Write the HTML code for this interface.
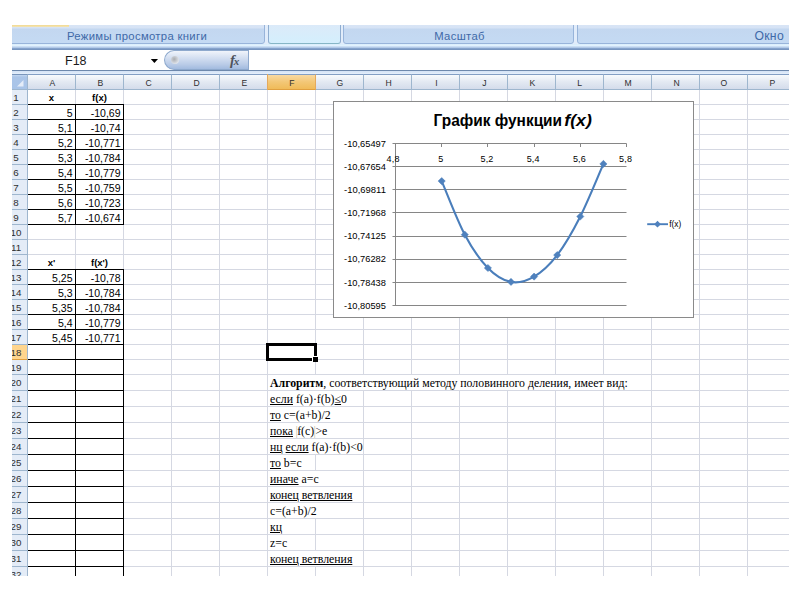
<!DOCTYPE html>
<html lang="ru">
<head>
<meta charset="utf-8">
<title>Excel</title>
<style>
html,body{margin:0;padding:0;background:#fff;}
body{width:800px;height:600px;position:relative;overflow:hidden;font-family:"Liberation Sans",sans-serif;}
#app{position:absolute;left:12px;top:25px;width:777px;height:551px;overflow:hidden;background:#fff;}
#app *{position:absolute;box-sizing:border-box;}
#app span,#app b,#app u{position:static;}
.ribbon{left:0;top:0;width:777px;height:22px;background:#e1ecfa;}
.tabmark{left:0;top:0;width:57px;height:2px;background:linear-gradient(#f3d98f,#f1e4b8);z-index:3;}
.grp{top:-5px;height:24px;border:1px solid #98b4da;border-radius:3px;background:linear-gradient(#dbe7f6 0,#d6e3f5 7px,#c3d7f0 8px,#c4daf3 100%);color:#3f69a8;font-size:11.3px;letter-spacing:0.32px;line-height:31px;text-align:center;white-space:nowrap;}
.grp.hot{background:linear-gradient(#dde9f8,#d4effd);border-color:#8fadd0 #8fadd0 #86b6c6 #8fadd0;}
.rib2{left:0;top:19px;width:777px;height:4px;background:linear-gradient(#d9edfc 0,#e3f3fe 45%,#c0d5ef 70%,#a9c2e4);}
.ribline{left:0;top:23px;width:777px;height:2px;background:linear-gradient(#8eabd3,#718fba);}
.fbar{left:0;top:25px;width:777px;height:20px;background:#fff;}
.namebox{left:0;top:0;width:152px;height:20px;font-size:12.5px;line-height:20px;color:#1a1a1a;}
.fxpill{left:152px;top:0;width:84px;height:20px;border-radius:10px 0 0 10px;background:linear-gradient(#f0f4fb,#d6e1f2 35%,#b9cbe7 75%,#a2bbdf);border:1px solid #8ea9cd;border-right:none;}
.finput{left:236px;top:0;width:541px;height:20px;border-left:1px solid #8ea9cd;background:#fff;}
.fline{left:0;top:45px;width:777px;height:1px;background:#6d88ac;}
.fgap{left:0;top:46px;width:777px;height:3px;background:linear-gradient(#d3e2f5,#dce9f9 60%,#e6f0fb);}
.ch{top:49px;height:16px;border-top:1px solid #829ec4;border-bottom:1px solid #9eb6ce;border-right:1px solid #9eb6ce;background:linear-gradient(#f7fafd,#e3e9f2 50%,#d4dceb);color:#2f2f2f;font-size:9.8px;line-height:15px;text-align:center;}
.ch.sel{background:linear-gradient(#f8d9a2,#f3c776 50%,#f0bb59);border-bottom-color:#e0a040;border-right-color:#e5a95c;box-shadow:-1px 0 0 #e5a95c;}
.hl{display:inline-block;transform:scaleX(.88);position:relative !important;left:0.6px;}
.corner{left:0;top:49px;width:16px;height:16px;background:linear-gradient(#c3d7f0 0,#abc5e8 2px,#a9c4e8);border-top:1px solid #7995bb;border-right:1px solid #9eb6ce;border-bottom:1px solid #9eb6ce;}
.rh{left:-7px;width:23px;background:#e4ecf7;border-right:1px solid #9eb6ce;border-bottom:1px solid #9eb6ce;color:#2f2f2f;font-size:9.8px;text-align:center;}
.rh.sel{background:#ffd58d;border-bottom-color:#e0a040;}
.gv{width:1px;background:#d5d8e2;}
.gh{height:1px;background:#d5d8e2;}
.w{background:#fff;}
.bk{background:#000;}
.c{font-size:10.5px;color:#000;white-space:nowrap;height:16px;line-height:16px;}
.c.r{text-align:right;padding-right:2.5px;}
.c.b{text-align:center;font-weight:bold;font-size:9.5px;}
.t{font-family:"Liberation Serif",serif;font-size:11.8px;color:#000;white-space:nowrap;height:16px;line-height:16px;left:258px;}
.t u{text-decoration:underline;}
.t .p{color:#c4bfa6;margin:0 -0.6px;}
.selbox{border:3px solid #000;}
.handle{background:#000;border:1px solid #fff;border-right:none;border-bottom:none;}
#chart{left:321px;top:76px;}
</style>
</head>
<body>
<div id="app">

<div class="ribbon">
<div class="tabmark"></div>
<div class="grp" style="left:-6px;width:259px;"><span style="position:relative;left:1.5px;">Режимы просмотра книги</span></div>
<div class="grp hot" style="left:256px;width:73px;"></div>
<div class="grp" style="left:331px;width:231px;"><span style="position:relative;left:1px;">Масштаб</span></div>
<div class="grp" style="left:565px;width:230px;text-align:right;padding-right:22px;font-size:12.2px;">Окно</div>
</div>
<div class="rib2"></div><div class="ribline"></div>
<div class="fbar">
<div class="namebox"><span style="position:absolute;left:53px;top:1px;">F18</span><svg style="left:138px;top:8px;" width="10" height="6" viewBox="0 0 10 6"><path d="M0.8 0.9h7.2l-3.6 4.1z" fill="#000"/></svg></div>
<div class="fxpill"><svg style="left:5px;top:4px;" width="10" height="10" viewBox="0 0 10 10"><defs><radialGradient id="kg" cx="40%" cy="40%" r="60%"><stop offset="0" stop-color="#a9acb0"/><stop offset="1" stop-color="#dfe3ea"/></radialGradient></defs><circle cx="5" cy="5" r="4" fill="url(#kg)"/></svg><div style="left:65px;top:-1px;font-family:'Liberation Serif',serif;font-style:italic;font-weight:bold;font-size:14.5px;line-height:20px;color:#4d525c;white-space:nowrap;">f<span style="font-size:11px;margin-left:-1px;">x</span></div></div>
<div class="finput"></div>
</div>
<div class="fline"></div><div class="fgap"></div>
<div class="corner"><svg style="left:5px;top:5px;" width="7" height="7" viewBox="0 0 7 7"><path d="M6.5 0V6.5H0z" fill="#e4ecf8"/></svg></div>
<div class="ch" style="left:16px;width:48px;"><span class="hl">A</span></div>
<div class="ch" style="left:64px;width:48px;"><span class="hl">B</span></div>
<div class="ch" style="left:112px;width:48px;"><span class="hl">C</span></div>
<div class="ch" style="left:160px;width:48px;"><span class="hl">D</span></div>
<div class="ch" style="left:208px;width:48px;"><span class="hl">E</span></div>
<div class="ch sel" style="left:256px;width:48px;"><span class="hl">F</span></div>
<div class="ch" style="left:304px;width:48px;"><span class="hl">G</span></div>
<div class="ch" style="left:352px;width:48px;"><span class="hl">H</span></div>
<div class="ch" style="left:400px;width:48px;"><span class="hl">I</span></div>
<div class="ch" style="left:448px;width:48px;"><span class="hl">J</span></div>
<div class="ch" style="left:496px;width:48px;"><span class="hl">K</span></div>
<div class="ch" style="left:544px;width:48px;"><span class="hl">L</span></div>
<div class="ch" style="left:592px;width:48px;"><span class="hl">M</span></div>
<div class="ch" style="left:640px;width:48px;"><span class="hl">N</span></div>
<div class="ch" style="left:688px;width:48px;"><span class="hl">O</span></div>
<div class="ch" style="left:736px;width:48px;"><span class="hl">P</span></div>
<div class="gv" style="left:63px;top:65px;height:486px;"></div>
<div class="gv" style="left:111px;top:65px;height:486px;"></div>
<div class="gv" style="left:159px;top:65px;height:486px;"></div>
<div class="gv" style="left:207px;top:65px;height:486px;"></div>
<div class="gv" style="left:255px;top:65px;height:486px;"></div>
<div class="gv" style="left:303px;top:65px;height:486px;"></div>
<div class="gv" style="left:351px;top:65px;height:486px;"></div>
<div class="gv" style="left:399px;top:65px;height:486px;"></div>
<div class="gv" style="left:447px;top:65px;height:486px;"></div>
<div class="gv" style="left:495px;top:65px;height:486px;"></div>
<div class="gv" style="left:543px;top:65px;height:486px;"></div>
<div class="gv" style="left:591px;top:65px;height:486px;"></div>
<div class="gv" style="left:639px;top:65px;height:486px;"></div>
<div class="gv" style="left:687px;top:65px;height:486px;"></div>
<div class="gv" style="left:735px;top:65px;height:486px;"></div>
<div class="gv" style="left:783px;top:65px;height:486px;"></div>
<div class="gh" style="left:16px;top:79px;width:761px;"></div>
<div class="gh" style="left:16px;top:94px;width:761px;"></div>
<div class="gh" style="left:16px;top:109px;width:761px;"></div>
<div class="gh" style="left:16px;top:124px;width:761px;"></div>
<div class="gh" style="left:16px;top:139px;width:761px;"></div>
<div class="gh" style="left:16px;top:154px;width:761px;"></div>
<div class="gh" style="left:16px;top:169px;width:761px;"></div>
<div class="gh" style="left:16px;top:184px;width:761px;"></div>
<div class="gh" style="left:16px;top:199px;width:761px;"></div>
<div class="gh" style="left:16px;top:214px;width:761px;"></div>
<div class="gh" style="left:16px;top:229px;width:761px;"></div>
<div class="gh" style="left:16px;top:244px;width:761px;"></div>
<div class="gh" style="left:16px;top:259px;width:761px;"></div>
<div class="gh" style="left:16px;top:274px;width:761px;"></div>
<div class="gh" style="left:16px;top:289px;width:761px;"></div>
<div class="gh" style="left:16px;top:304px;width:761px;"></div>
<div class="gh" style="left:16px;top:319px;width:761px;"></div>
<div class="gh" style="left:16px;top:334px;width:761px;"></div>
<div class="gh" style="left:16px;top:349px;width:761px;"></div>
<div class="gh" style="left:16px;top:365px;width:761px;"></div>
<div class="gh" style="left:16px;top:381px;width:761px;"></div>
<div class="gh" style="left:16px;top:397px;width:761px;"></div>
<div class="gh" style="left:16px;top:413px;width:761px;"></div>
<div class="gh" style="left:16px;top:429px;width:761px;"></div>
<div class="gh" style="left:16px;top:445px;width:761px;"></div>
<div class="gh" style="left:16px;top:461px;width:761px;"></div>
<div class="gh" style="left:16px;top:477px;width:761px;"></div>
<div class="gh" style="left:16px;top:493px;width:761px;"></div>
<div class="gh" style="left:16px;top:509px;width:761px;"></div>
<div class="gh" style="left:16px;top:525px;width:761px;"></div>
<div class="gh" style="left:16px;top:541px;width:761px;"></div>
<div class="gh" style="left:16px;top:557px;width:761px;"></div>
<div class="rh" style="top:65px;height:15px;line-height:15px;">1</div>
<div class="rh" style="top:80px;height:15px;line-height:15px;">2</div>
<div class="rh" style="top:95px;height:15px;line-height:15px;">3</div>
<div class="rh" style="top:110px;height:15px;line-height:15px;">4</div>
<div class="rh" style="top:125px;height:15px;line-height:15px;">5</div>
<div class="rh" style="top:140px;height:15px;line-height:15px;">6</div>
<div class="rh" style="top:155px;height:15px;line-height:15px;">7</div>
<div class="rh" style="top:170px;height:15px;line-height:15px;">8</div>
<div class="rh" style="top:185px;height:15px;line-height:15px;">9</div>
<div class="rh" style="top:200px;height:15px;line-height:15px;">10</div>
<div class="rh" style="top:215px;height:15px;line-height:15px;">11</div>
<div class="rh" style="top:230px;height:15px;line-height:15px;">12</div>
<div class="rh" style="top:245px;height:15px;line-height:15px;">13</div>
<div class="rh" style="top:260px;height:15px;line-height:15px;">14</div>
<div class="rh" style="top:275px;height:15px;line-height:15px;">15</div>
<div class="rh" style="top:290px;height:15px;line-height:15px;">16</div>
<div class="rh" style="top:305px;height:15px;line-height:15px;">17</div>
<div class="rh sel" style="top:320px;height:15px;line-height:15px;">18</div>
<div class="rh" style="top:335px;height:15px;line-height:15px;">19</div>
<div class="rh" style="top:350px;height:16px;line-height:16px;">20</div>
<div class="rh" style="top:366px;height:16px;line-height:16px;">21</div>
<div class="rh" style="top:382px;height:16px;line-height:16px;">22</div>
<div class="rh" style="top:398px;height:16px;line-height:16px;">23</div>
<div class="rh" style="top:414px;height:16px;line-height:16px;">24</div>
<div class="rh" style="top:430px;height:16px;line-height:16px;">25</div>
<div class="rh" style="top:446px;height:16px;line-height:16px;">26</div>
<div class="rh" style="top:462px;height:16px;line-height:16px;">27</div>
<div class="rh" style="top:478px;height:16px;line-height:16px;">28</div>
<div class="rh" style="top:494px;height:16px;line-height:16px;">29</div>
<div class="rh" style="top:510px;height:16px;line-height:16px;">30</div>
<div class="rh" style="top:526px;height:16px;line-height:16px;">31</div>
<div class="rh" style="top:542px;height:16px;line-height:16px;">32</div>
<div class="rh" style="top:558px;height:16px;line-height:16px;">33</div>
<div class="w" style="left:256px;top:350px;width:383px;height:15px;"></div>
<div class="w" style="left:256px;top:366px;width:95px;height:15px;"></div>
<div class="w" style="left:256px;top:382px;width:95px;height:15px;"></div>
<div class="w" style="left:256px;top:398px;width:95px;height:15px;"></div>
<div class="w" style="left:256px;top:414px;width:95px;height:15px;"></div>
<div class="w" style="left:256px;top:446px;width:95px;height:15px;"></div>
<div class="w" style="left:256px;top:462px;width:95px;height:15px;"></div>
<div class="w" style="left:256px;top:478px;width:95px;height:15px;"></div>
<div class="w" style="left:256px;top:526px;width:95px;height:15px;"></div>
<div class="bk" style="left:16px;top:79px;width:96px;height:1px;"></div>
<div class="bk" style="left:16px;top:94px;width:96px;height:1px;"></div>
<div class="bk" style="left:16px;top:109px;width:96px;height:1px;"></div>
<div class="bk" style="left:16px;top:124px;width:96px;height:1px;"></div>
<div class="bk" style="left:16px;top:139px;width:96px;height:1px;"></div>
<div class="bk" style="left:16px;top:154px;width:96px;height:1px;"></div>
<div class="bk" style="left:16px;top:169px;width:96px;height:1px;"></div>
<div class="bk" style="left:16px;top:184px;width:96px;height:1px;"></div>
<div class="bk" style="left:16px;top:199px;width:96px;height:1px;"></div>
<div class="bk" style="left:16px;top:244px;width:96px;height:1px;"></div>
<div class="bk" style="left:16px;top:259px;width:96px;height:1px;"></div>
<div class="bk" style="left:16px;top:274px;width:96px;height:1px;"></div>
<div class="bk" style="left:16px;top:289px;width:96px;height:1px;"></div>
<div class="bk" style="left:16px;top:304px;width:96px;height:1px;"></div>
<div class="bk" style="left:16px;top:319px;width:96px;height:1px;"></div>
<div class="bk" style="left:16px;top:334px;width:96px;height:1px;"></div>
<div class="bk" style="left:16px;top:349px;width:96px;height:1px;"></div>
<div class="bk" style="left:16px;top:365px;width:96px;height:1px;"></div>
<div class="bk" style="left:16px;top:381px;width:96px;height:1px;"></div>
<div class="bk" style="left:16px;top:397px;width:96px;height:1px;"></div>
<div class="bk" style="left:16px;top:413px;width:96px;height:1px;"></div>
<div class="bk" style="left:16px;top:429px;width:96px;height:1px;"></div>
<div class="bk" style="left:16px;top:445px;width:96px;height:1px;"></div>
<div class="bk" style="left:16px;top:461px;width:96px;height:1px;"></div>
<div class="bk" style="left:16px;top:477px;width:96px;height:1px;"></div>
<div class="bk" style="left:16px;top:493px;width:96px;height:1px;"></div>
<div class="bk" style="left:16px;top:509px;width:96px;height:1px;"></div>
<div class="bk" style="left:16px;top:525px;width:96px;height:1px;"></div>
<div class="bk" style="left:16px;top:541px;width:96px;height:1px;"></div>
<div class="bk" style="left:16px;top:557px;width:96px;height:1px;"></div>
<div class="bk" style="left:63px;top:79px;width:1px;height:121px;"></div>
<div class="bk" style="left:63px;top:244px;width:1px;height:330px;"></div>
<div class="bk" style="left:111px;top:79px;width:1px;height:121px;"></div>
<div class="bk" style="left:111px;top:244px;width:1px;height:330px;"></div>
<div class="c b" style="left:16px;top:65px;width:47px;">x</div>
<div class="c r" style="left:16px;top:80px;width:47px;">5</div>
<div class="c r" style="left:16px;top:95px;width:47px;">5,1</div>
<div class="c r" style="left:16px;top:110px;width:47px;">5,2</div>
<div class="c r" style="left:16px;top:125px;width:47px;">5,3</div>
<div class="c r" style="left:16px;top:140px;width:47px;">5,4</div>
<div class="c r" style="left:16px;top:155px;width:47px;">5,5</div>
<div class="c r" style="left:16px;top:170px;width:47px;">5,6</div>
<div class="c r" style="left:16px;top:185px;width:47px;">5,7</div>
<div class="c b" style="left:16px;top:230px;width:47px;">x'</div>
<div class="c r" style="left:16px;top:245px;width:47px;">5,25</div>
<div class="c r" style="left:16px;top:260px;width:47px;">5,3</div>
<div class="c r" style="left:16px;top:275px;width:47px;">5,35</div>
<div class="c r" style="left:16px;top:290px;width:47px;">5,4</div>
<div class="c r" style="left:16px;top:305px;width:47px;">5,45</div>
<div class="c b" style="left:64px;top:65px;width:47px;">f(x)</div>
<div class="c r" style="left:64px;top:80px;width:47px;">-10,69</div>
<div class="c r" style="left:64px;top:95px;width:47px;">-10,74</div>
<div class="c r" style="left:64px;top:110px;width:47px;">-10,771</div>
<div class="c r" style="left:64px;top:125px;width:47px;">-10,784</div>
<div class="c r" style="left:64px;top:140px;width:47px;">-10,779</div>
<div class="c r" style="left:64px;top:155px;width:47px;">-10,759</div>
<div class="c r" style="left:64px;top:170px;width:47px;">-10,723</div>
<div class="c r" style="left:64px;top:185px;width:47px;">-10,674</div>
<div class="c b" style="left:64px;top:230px;width:47px;">f(x')</div>
<div class="c r" style="left:64px;top:245px;width:47px;">-10,78</div>
<div class="c r" style="left:64px;top:260px;width:47px;">-10,784</div>
<div class="c r" style="left:64px;top:275px;width:47px;">-10,784</div>
<div class="c r" style="left:64px;top:290px;width:47px;">-10,779</div>
<div class="c r" style="left:64px;top:305px;width:47px;">-10,771</div>
<div class="selbox" style="left:254px;top:318px;width:51px;height:18px;"></div>
<div class="handle" style="left:300px;top:331px;width:6px;height:6px;"></div>
<div class="t" style="top:350px;"><b>Алгоритм</b>, соответствующий методу половинного деления, имеет вид:</div>
<div class="t" style="top:366px;"><u>если</u> f(a)·f(b)<u>≤</u>0</div>
<div class="t" style="top:382px;"><u>то</u> c=(a+b)/2</div>
<div class="t" style="top:398px;"><u>пока</u> <span class="p">|</span>f(c)<span class="p">|</span>&gt;e</div>
<div class="t" style="top:414px;"><u>нц</u> <u>если</u> f(a)·f(b)&lt;0</div>
<div class="t" style="top:430px;"><u>то</u> b=c</div>
<div class="t" style="top:446px;"><u>иначе</u> a=c</div>
<div class="t" style="top:462px;"><u>конец ветвления</u></div>
<div class="t" style="top:478px;">c=(a+b)/2</div>
<div class="t" style="top:494px;"><u>кц</u></div>
<div class="t" style="top:510px;">z=c</div>
<div class="t" style="top:526px;"><u>конец ветвления</u></div>
<svg id="chart" style="left:321px;top:76px;" width="361" height="217" viewBox="0 0 361 217" font-family="'Liberation Sans',sans-serif">
<rect x="0.5" y="0.5" width="360" height="216" fill="#fff" stroke="#8a8a8a" stroke-width="1"/>
<line x1="59.5" y1="42.5" x2="293.5" y2="42.5" stroke="#868686" stroke-width="1"/>
<text x="52.9" y="45.7" font-size="8.7" text-anchor="end" fill="#000" textLength="41.8" lengthAdjust="spacingAndGlyphs">-10,65497</text>
<line x1="59.5" y1="65.5" x2="293.5" y2="65.5" stroke="#868686" stroke-width="1"/>
<text x="52.9" y="68.8" font-size="8.7" text-anchor="end" fill="#000" textLength="41.8" lengthAdjust="spacingAndGlyphs">-10,67654</text>
<line x1="59.5" y1="88.5" x2="293.5" y2="88.5" stroke="#868686" stroke-width="1"/>
<text x="52.9" y="92.0" font-size="8.7" text-anchor="end" fill="#000" textLength="41.8" lengthAdjust="spacingAndGlyphs">-10,69811</text>
<line x1="59.5" y1="111.5" x2="293.5" y2="111.5" stroke="#868686" stroke-width="1"/>
<text x="52.9" y="115.1" font-size="8.7" text-anchor="end" fill="#000" textLength="41.8" lengthAdjust="spacingAndGlyphs">-10,71968</text>
<line x1="59.5" y1="135.5" x2="293.5" y2="135.5" stroke="#868686" stroke-width="1"/>
<text x="52.9" y="138.3" font-size="8.7" text-anchor="end" fill="#000" textLength="41.8" lengthAdjust="spacingAndGlyphs">-10,74125</text>
<line x1="59.5" y1="158.5" x2="293.5" y2="158.5" stroke="#868686" stroke-width="1"/>
<text x="52.9" y="161.4" font-size="8.7" text-anchor="end" fill="#000" textLength="41.8" lengthAdjust="spacingAndGlyphs">-10,76282</text>
<line x1="59.5" y1="181.5" x2="293.5" y2="181.5" stroke="#868686" stroke-width="1"/>
<text x="52.9" y="184.6" font-size="8.7" text-anchor="end" fill="#000" textLength="41.8" lengthAdjust="spacingAndGlyphs">-10,78438</text>
<line x1="59.5" y1="204.5" x2="293.5" y2="204.5" stroke="#868686" stroke-width="1"/>
<text x="52.9" y="207.7" font-size="8.7" text-anchor="end" fill="#000" textLength="41.8" lengthAdjust="spacingAndGlyphs">-10,80595</text>
<line x1="62.5" y1="42.5" x2="62.5" y2="204.5" stroke="#868686" stroke-width="1"/>
<line x1="62.5" y1="42.5" x2="62.5" y2="46.0" stroke="#868686" stroke-width="1"/>
<text x="60.1" y="60.9" font-size="9" letter-spacing="0.15" text-anchor="middle" fill="#000">4,8</text>
<line x1="108.5" y1="42.5" x2="108.5" y2="46.0" stroke="#868686" stroke-width="1"/>
<text x="107.8" y="60.9" font-size="9" letter-spacing="0.15" text-anchor="middle" fill="#000">5</text>
<line x1="154.5" y1="42.5" x2="154.5" y2="46.0" stroke="#868686" stroke-width="1"/>
<text x="154.0" y="60.9" font-size="9" letter-spacing="0.15" text-anchor="middle" fill="#000">5,2</text>
<line x1="201.5" y1="42.5" x2="201.5" y2="46.0" stroke="#868686" stroke-width="1"/>
<text x="200.2" y="60.9" font-size="9" letter-spacing="0.15" text-anchor="middle" fill="#000">5,4</text>
<line x1="247.5" y1="42.5" x2="247.5" y2="46.0" stroke="#868686" stroke-width="1"/>
<text x="246.4" y="60.9" font-size="9" letter-spacing="0.15" text-anchor="middle" fill="#000">5,6</text>
<line x1="293.5" y1="42.5" x2="293.5" y2="46.0" stroke="#868686" stroke-width="1"/>
<text x="292.6" y="60.9" font-size="9" letter-spacing="0.15" text-anchor="middle" fill="#000">5,8</text>
<path d="M108.7 80.1 C112.6 89.0 124.1 119.2 131.8 133.7 C139.5 148.2 147.2 159.1 154.9 167.0 C162.6 174.9 170.3 179.5 178.0 180.9 C185.7 182.4 193.4 180.0 201.1 175.6 C208.8 171.1 216.5 164.1 224.2 154.1 C231.9 144.1 239.6 130.7 247.3 115.5 C255.0 100.3 266.6 71.7 270.4 62.9" fill="none" stroke="#4a7ebb" stroke-width="2.1" stroke-linecap="round"/>
<path d="M108.7 76.5l3.6 3.6l-3.6 3.6l-3.6 -3.6z" fill="#4f81bd" stroke="#4a7ebb" stroke-width="0.5"/>
<path d="M131.8 130.1l3.6 3.6l-3.6 3.6l-3.6 -3.6z" fill="#4f81bd" stroke="#4a7ebb" stroke-width="0.5"/>
<path d="M154.9 163.4l3.6 3.6l-3.6 3.6l-3.6 -3.6z" fill="#4f81bd" stroke="#4a7ebb" stroke-width="0.5"/>
<path d="M178.0 177.3l3.6 3.6l-3.6 3.6l-3.6 -3.6z" fill="#4f81bd" stroke="#4a7ebb" stroke-width="0.5"/>
<path d="M201.1 172.0l3.6 3.6l-3.6 3.6l-3.6 -3.6z" fill="#4f81bd" stroke="#4a7ebb" stroke-width="0.5"/>
<path d="M224.2 150.5l3.6 3.6l-3.6 3.6l-3.6 -3.6z" fill="#4f81bd" stroke="#4a7ebb" stroke-width="0.5"/>
<path d="M247.3 111.9l3.6 3.6l-3.6 3.6l-3.6 -3.6z" fill="#4f81bd" stroke="#4a7ebb" stroke-width="0.5"/>
<path d="M270.4 59.3l3.6 3.6l-3.6 3.6l-3.6 -3.6z" fill="#4f81bd" stroke="#4a7ebb" stroke-width="0.5"/>
<text y="25.200000000000003" font-size="16.3" font-weight="bold" fill="#000"><tspan x="100.60000000000002" textLength="128.5" lengthAdjust="spacingAndGlyphs">График функции</tspan><tspan x="231.29999999999995" font-style="italic" textLength="27.5" lengthAdjust="spacingAndGlyphs">f(x)</tspan></text>
<line x1="314.20000000000005" y1="123.19999999999999" x2="335" y2="123.19999999999999" stroke="#4a7ebb" stroke-width="1.9"/>
<path d="M324.5 119.79999999999998l3.4 3.4l-3.4 3.4l-3.4 -3.4z" fill="#4f81bd"/>
<text x="336.29999999999995" y="126.39999999999999" font-size="9" fill="#000" textLength="12" lengthAdjust="spacingAndGlyphs">f(x)</text>
</svg>
</div>
</body>
</html>
